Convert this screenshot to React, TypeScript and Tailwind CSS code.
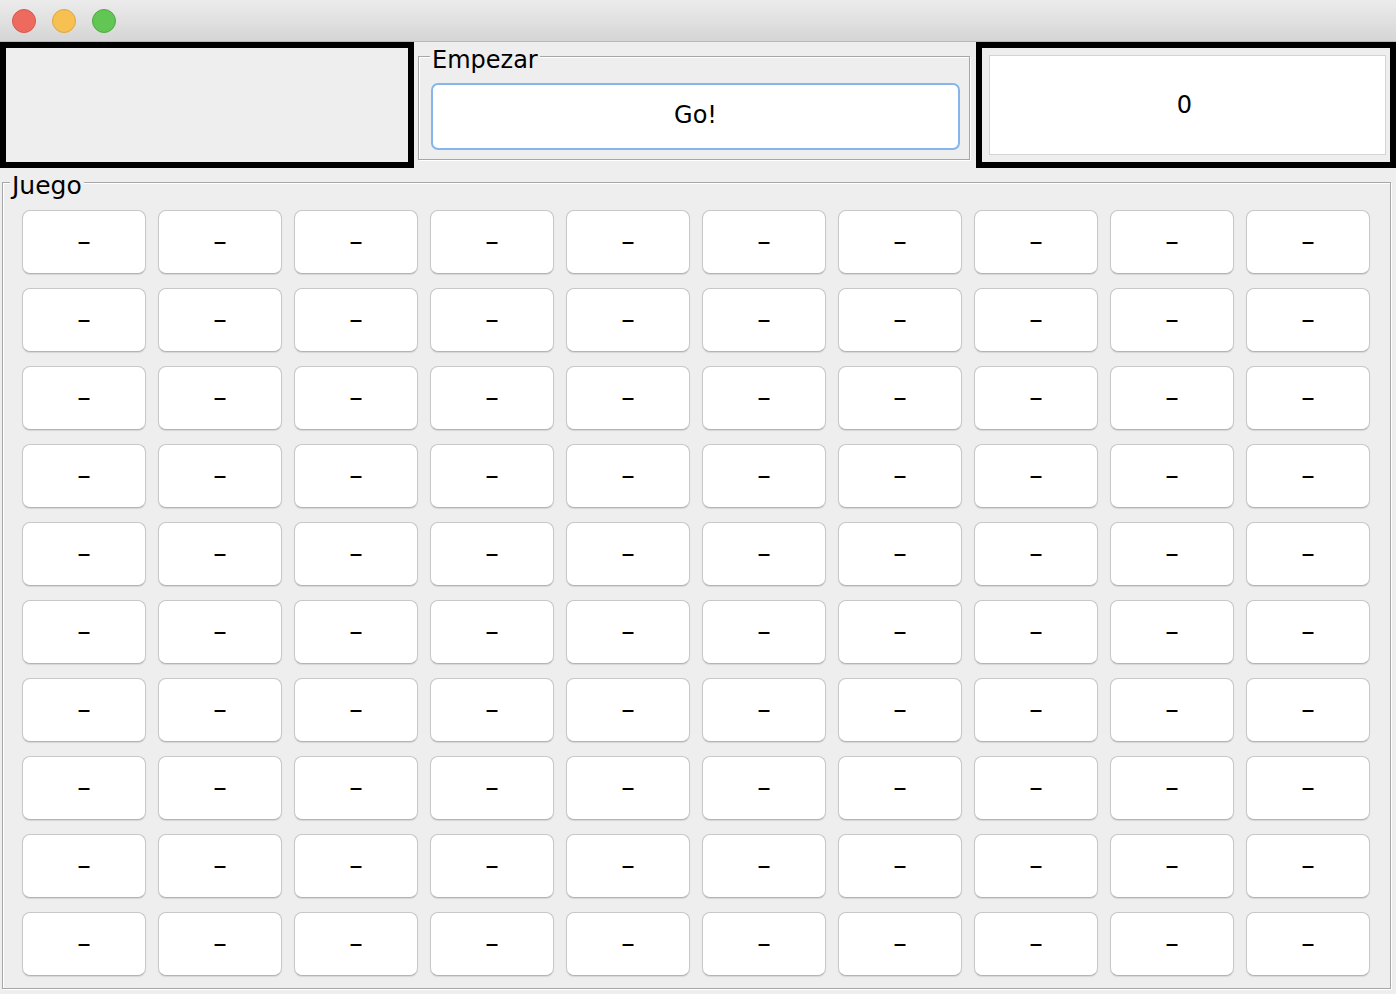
const ROWS = 10;
const COLS = 10;

function TitledBox({
    title,
    className = "",
    labelLeft = "left-[7px]",
    labelSize = "text-[24px]",
    children,
}: {
    title: string;
    className?: string;
    labelLeft?: string;
    labelSize?: string;
    children?: React.ReactNode;
}) {
    return (
        <div
            className={`relative border border-[#a7a7a7] shadow-[inset_1px_1px_0_#ffffff,1px_1px_0_#ffffff] ${className}`}
        >
            {/* label sits over the top border line */}
            <span
                className={`absolute top-[-9px] ${labelLeft} ${labelSize} bg-[#eeeeee] px-[2px] leading-[24px] text-black`}
            >
                {title}
            </span>
            {children}
        </div>
    );
}

function TrafficLights() {
    return (
        <div className="flex items-center gap-[16px] pl-[12px]">
            <div className="w-[24px] h-[24px] rounded-full bg-[#ee6a5f] border border-[#d8554b]" />
            <div className="w-[24px] h-[24px] rounded-full bg-[#f6c150] border border-[#dca63f]" />
            <div className="w-[24px] h-[24px] rounded-full bg-[#62c655] border border-[#50a943]" />
        </div>
    );
}

export default function App() {
    return (
        <div
            className="w-[1396px] h-[994px] overflow-hidden bg-[#eeeeee] flex flex-col"
            style={{ fontFamily: '"DejaVu Sans", "Liberation Sans", sans-serif' }}
        >
            {/* Window title bar */}
            <div className="h-[42px] shrink-0 flex items-center bg-gradient-to-b from-[#ececec] to-[#d5d5d5] border-b border-[#b9b9b9]">
                <TrafficLights />
            </div>

            {/* Top row: empty panel, start group, score */}
            <div className="h-[126px] shrink-0 flex">
                <div className="w-[414px] border-[6px] border-black bg-[#eeeeee]" />

                <div className="w-[562px] flex pt-[14px] pl-[4px] pr-[6px] pb-[8px]">
                    <TitledBox title="Empezar" labelLeft="left-[11px]" className="flex-1 flex">
                        <button className="flex-1 mt-[26px] mb-[9px] ml-[12px] mr-[9px] pb-[3px] bg-white rounded-[7px] border-2 border-[#86b5ec] text-[24px] text-black flex items-center justify-center">
                            Go!
                        </button>
                    </TitledBox>
                </div>

                <div className="w-[420px] border-[6px] border-black flex pt-[7px] pb-[7px] pl-[7px] pr-[4px]">
                    <div className="flex-1 bg-white border border-[#d4d4d4] flex items-center justify-center pr-[6px] text-[24px] text-black">
                        0
                    </div>
                </div>
            </div>

            {/* Game board */}
            <TitledBox
                title="Juego"
                labelSize="text-[25px]"
                className="mt-[14px] ml-[2px] w-[1389px] h-[807px] pt-[27px] pl-[19px] pr-[20px] pb-[12px]"
            >
                <div className="grid grid-cols-10 gap-x-[12px] gap-y-[14px]">
                    {Array.from({ length: ROWS * COLS }).map((_, i) => (
                        <button
                            key={i}
                            className="w-[124px] h-[64px] bg-white rounded-[8px] border border-[#c8c8c8] border-b-[#b4b4b4] shadow-[0_1px_1px_rgba(0,0,0,0.1)] flex items-center justify-center pb-[3px] text-[27px] leading-none text-black"
                        >
                            –
                        </button>
                    ))}
                </div>
            </TitledBox>
        </div>
    );
}
